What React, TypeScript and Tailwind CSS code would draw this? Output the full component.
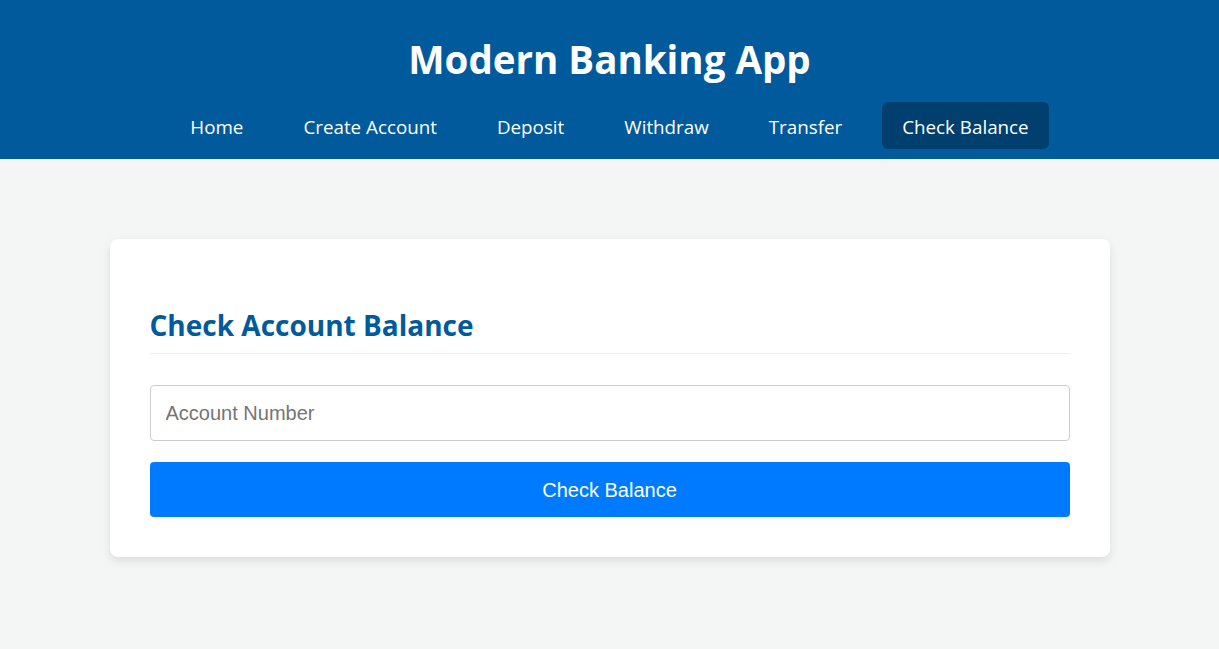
import { useState } from 'react';

const NAV = ['Home', 'Create Account', 'Deposit', 'Withdraw', 'Transfer', 'Check Balance'];

export default function App() {
  const [active, setActive] = useState('Check Balance');
  const [account, setAccount] = useState('');

  return (
    <div className="min-h-screen bg-[#f4f5f5] font-['Open_Sans',sans-serif]">
      {/* Header */}
      <header className="bg-[#005a9c] pt-[29px] pb-[10px] text-white">
        <h1 className="text-center text-[38.5px] font-bold leading-[60px]">Modern Banking App</h1>
        <nav className="mt-[13px] flex justify-center gap-5">
          {NAV.map((item) => (
            <button
              key={item}
              onClick={() => setActive(item)}
              className={
                item === active
                  ? 'rounded-md bg-[#003f6e] px-5 pt-[12px] pb-[8px] text-[18.8px] leading-[27px] text-white'
                  : 'rounded-md px-5 pt-[12px] pb-[8px] text-[18.8px] leading-[27px] text-white'
              }
            >
              {item}
            </button>
          ))}
        </nav>
      </header>

      {/* Balance card */}
      <main className="px-4 pt-20">
        <div className="mx-auto max-w-[1000px] rounded-lg bg-white px-10 pb-10 pt-[68px] shadow-[0_4px_10px_rgba(0,0,0,0.1)]">
          <h2 className="border-b border-[#eeeeee] pb-[10px] text-[28px] font-bold leading-[36px] text-[#005a9c]">
            Check Account Balance
          </h2>
          <input
            value={account}
            onChange={(e) => setAccount(e.target.value)}
            placeholder="Account Number"
            className="mt-[31px] block h-[56px] w-full rounded border border-[#cccccc] px-[15px] font-['Liberation_Sans',Arial,sans-serif] text-[20px] text-[#333] outline-none placeholder:text-[#757575]"
          />
          <button className="mt-[21px] block h-[55px] w-full rounded bg-[#007bff] font-['Liberation_Sans',Arial,sans-serif] text-[20px] text-white">
            Check Balance
          </button>
        </div>
      </main>
    </div>
  );
}
